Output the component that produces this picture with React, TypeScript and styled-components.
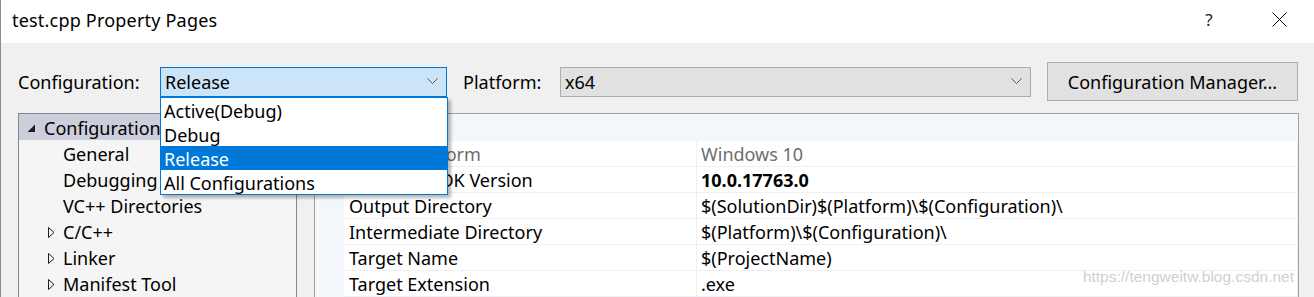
import React from 'react';
import styled, { createGlobalStyle } from 'styled-components';

const Global = createGlobalStyle`
  html, body { margin: 0; padding: 0; background: #f0f0f0; overflow: hidden; }
  body { font-family: "Noto Sans", "Segoe UI", sans-serif; color: #000; }
  * { box-sizing: border-box; }
`;

const FONT = `"Noto Sans", "Segoe UI", sans-serif`;

const Window = styled.div`
  position: relative;
  width: 1314px;
  height: 297px;
  display: flex;
  flex-direction: column;
  background: #f0f0f0;
  border-left: 1px solid #8c8c8c;
  overflow: hidden;
  font-family: ${FONT};
  font-size: 18px;
`;

const TitleBar = styled.div`
  flex: none;
  height: 43px;
  background: #ffffff;
  display: flex;
  align-items: center;
  padding: 0 12px 4px 11px;
`;

const Title = styled.div`
  font-size: 18px;
  letter-spacing: 0.2px;
  color: #000;
`;

const TitleControls = styled.div`
  margin-left: auto;
  display: flex;
  gap: 24px;
`;

const TitleButton = styled.div`
  width: 46px;
  height: 30px;
  display: flex;
  align-items: center;
  justify-content: center;
  font-size: 17px;
  color: #222;
`;

const Toolbar = styled.div`
  flex: none;
  display: flex;
  align-items: center;
  padding: 19px 16px 12px 17px;
`;

const Label = styled.div<{ $w: number; $ml?: number }>`
  width: ${p => p.$w}px;
  margin-left: ${p => p.$ml ?? 0}px;
  color: #000;
`;

const ComboWrap = styled.div<{ $w: number }>`
  position: relative;
  width: ${p => p.$w}px;
`;

const Combo = styled.div<{ $active?: boolean }>`
  height: 30px;
  display: flex;
  align-items: center;
  padding: 0 8px 0 4px;
  background: ${p => (p.$active ? '#cce4f7' : '#e1e1e1')};
  border: 1px solid ${p => (p.$active ? '#0078d7' : '#adadad')};
`;

const ComboText = styled.span`
  flex: 1;
`;

const DropList = styled.div`
  position: absolute;
  top: 100%;
  left: 0;
  width: 288px;
  background: #fff;
  border: 1px solid #0078d7;
  box-shadow: 3px 3px 3px rgba(0, 0, 0, 0.28);
  z-index: 10;
`;

const DropItem = styled.div<{ $sel?: boolean }>`
  height: 24px;
  display: flex;
  align-items: center;
  padding: 2px 0 0 3px;
  background: ${p => (p.$sel ? '#0078d7' : '#fff')};
  color: ${p => (p.$sel ? '#fff' : '#000')};
`;

const Button = styled.div`
  margin-left: 16px;
  width: 251px;
  height: 39px;
  display: flex;
  align-items: center;
  justify-content: center;
  background: #e1e1e1;
  border: 1px solid #adadad;
`;

const Main = styled.div`
  flex: 1;
  display: flex;
  gap: 17px;
  padding: 0 15px 0 17px;
  min-height: 0;
`;

const Tree = styled.div`
  width: 279px;
  flex: none;
  border: 1px solid #828790;
  border-bottom: none;
  background: #f5f5f5;
  display: flex;
  flex-direction: column;
`;

const TreeRow = styled.div<{ $level: number; $sel?: boolean }>`
  height: 26px;
  flex: none;
  display: flex;
  align-items: center;
  padding-top: 2px;
  padding-left: ${p => 7 + p.$level * 19}px;
  background: ${p => (p.$sel ? '#cccedb' : 'transparent')};
  white-space: nowrap;
`;

const TreeIcon = styled.span`
  width: 18px;
  flex: none;
  display: flex;
  align-items: center;
`;

const Grid = styled.div`
  flex: 1;
  position: relative;
  border: 1px solid #a0a0a0;
  border-bottom: none;
  background: #f3f6fb;
  display: flex;
  flex-direction: column;
`;

const GridHeader = styled.div`
  height: 27px;
  flex: none;
`;

const GridRow = styled.div`
  height: 26px;
  flex: none;
  display: flex;
  padding-left: 29px;
`;

const Cell = styled.div<{ $w?: number; $muted?: boolean; $bold?: boolean; $pl: number }>`
  ${p => (p.$w ? `width: ${p.$w}px; flex: none;` : 'flex: 1;')}
  background: #fff;
  border-bottom: 1px solid #eef0f4;
  border-right: 1px solid #eef0f4;
  display: flex;
  align-items: center;
  padding-left: ${p => p.$pl}px;
  white-space: nowrap;
  color: ${p => (p.$muted ? '#6d6d6d' : '#000')};
  font-weight: ${p => (p.$bold ? 700 : 400)};
`;

const Watermark = styled.div`
  position: absolute;
  right: 4px;
  bottom: 11px;
  font-family: "Liberation Sans", Arial, sans-serif;
  font-size: 15.5px;
  color: rgba(190, 190, 190, 0.75);
`;

const Chevron = () => (
  <svg width="11" height="7" viewBox="0 0 11 7">
    <polyline points="0.5,0.5 5.5,5.5 10.5,0.5" fill="none" stroke="#555" strokeWidth="1" />
  </svg>
);

const CloseIcon = () => (
  <svg width="15" height="15" viewBox="0 0 15 15">
    <line x1="0.5" y1="0.5" x2="14.5" y2="14.5" stroke="#000" strokeWidth="1" />
    <line x1="14.5" y1="0.5" x2="0.5" y2="14.5" stroke="#000" strokeWidth="1" />
  </svg>
);

const Expanded = () => (
  <svg width="12" height="9" viewBox="0 0 12 9" style={{ marginLeft: 1 }}>
    <polygon points="8,0.5 8,8 0.5,8" fill="#1e1e1e" />
  </svg>
);

const Collapsed = () => (
  <svg width="8" height="11" viewBox="0 0 8 11" style={{ marginLeft: 3 }}>
    <polygon points="0.5,0.5 6,5.5 0.5,10.5" fill="none" stroke="#1e1e1e" strokeWidth="1" />
  </svg>
);

type TreeItem = { label: string; level: number; icon?: 'open' | 'closed'; sel?: boolean };

const treeItems: TreeItem[] = [
  { label: 'Configuration Properties', level: 0, icon: 'open', sel: true },
  { label: 'General', level: 1 },
  { label: 'Debugging', level: 1 },
  { label: 'VC++ Directories', level: 1 },
  { label: 'C/C++', level: 1, icon: 'closed' },
  { label: 'Linker', level: 1, icon: 'closed' },
  { label: 'Manifest Tool', level: 1, icon: 'closed' },
];

type Prop = { name: string; value: string; muted?: boolean; bold?: boolean };

const props: Prop[] = [
  { name: 'Target Platform', value: 'Windows 10', muted: true },
  { name: 'Windows SDK Version', value: '10.0.17763.0', bold: true },
  { name: 'Output Directory', value: '$(SolutionDir)$(Platform)\\$(Configuration)\\' },
  { name: 'Intermediate Directory', value: '$(Platform)\\$(Configuration)\\' },
  { name: 'Target Name', value: '$(ProjectName)' },
  { name: 'Target Extension', value: '.exe' },
];

const configs = ['Active(Debug)', 'Debug', 'Release', 'All Configurations'];

export default function App() {
  return (
    <>
      <Global />
      <Window>
        <TitleBar>
          <Title>test.cpp Property Pages</Title>
          <TitleControls>
            <TitleButton>?</TitleButton>
            <TitleButton>
              <CloseIcon />
            </TitleButton>
          </TitleControls>
        </TitleBar>

        <Toolbar>
          <Label $w={142}>Configuration:</Label>
          <ComboWrap $w={287}>
            <Combo $active>
              <ComboText>Release</ComboText>
              <Chevron />
            </Combo>
            <DropList>
              {configs.map(c => (
                <DropItem key={c} $sel={c === 'Release'}>
                  {c}
                </DropItem>
              ))}
            </DropList>
          </ComboWrap>
          <Label $w={97} $ml={16}>
            Platform:
          </Label>
          <ComboWrap $w={471}>
            <Combo>
              <ComboText>x64</ComboText>
              <Chevron />
            </Combo>
          </ComboWrap>
          <Button>Configuration Manager...</Button>
        </Toolbar>

        <Main>
          <Tree>
            {treeItems.map(t => (
              <TreeRow key={t.label} $level={t.level} $sel={t.sel}>
                <TreeIcon>
                  {t.icon === 'open' && <Expanded />}
                  {t.icon === 'closed' && <Collapsed />}
                </TreeIcon>
                {t.label}
              </TreeRow>
            ))}
          </Tree>
          <Grid>
            <GridHeader />
            {props.map(p => (
              <GridRow key={p.name}>
                <Cell $w={353} $pl={5} $muted={p.muted}>
                  {p.name}
                </Cell>
                <Cell $pl={4} $muted={p.muted} $bold={p.bold}>
                  {p.value}
                </Cell>
              </GridRow>
            ))}
            <Watermark>https://tengweitw.blog.csdn.net</Watermark>
          </Grid>
        </Main>
      </Window>
    </>
  );
}
